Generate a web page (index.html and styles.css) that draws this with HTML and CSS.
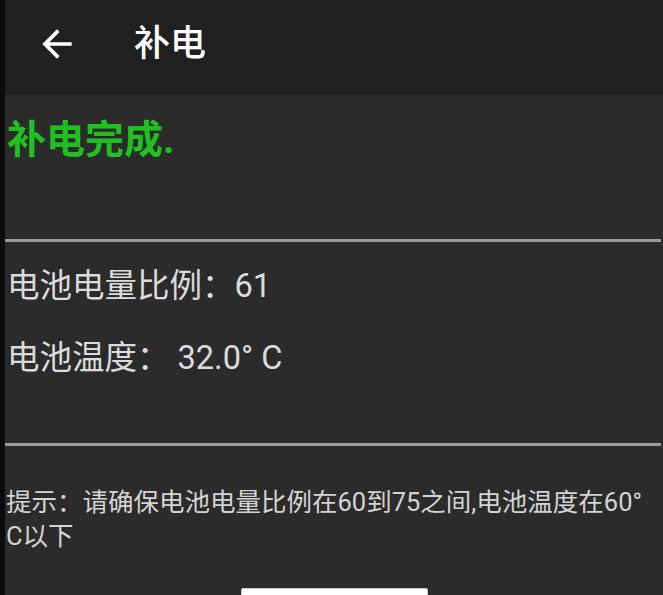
FILE: index.html
```html
<!DOCTYPE html>
<html lang="zh-CN">
<head>
<meta charset="utf-8">
<title>补电</title>
<link rel="stylesheet" href="styles.css">
</head>
<body>
<div class="app">
  <header class="topbar">
    <svg class="back" viewBox="0 0 24 24" width="44" height="44" aria-hidden="true">
      <path d="M20 11H7.83l5.59-5.59L12 4l-8 8 8 8 1.41-1.41L7.83 13H20v-2z" fill="#ffffff"/>
    </svg>
    <h1 class="title">补电</h1>
  </header>
  <main class="content">
    <p class="status">补电完成.</p>
    <hr class="divider divider-top">
    <p class="row row-first">电池电量比例：61</p>
    <p class="row">电池温度： 32.0° C</p>
    <hr class="divider divider-bottom">
    <p class="hint">提示：请确保电池电量比例在60到75之间,电池温度在60°<br>C以下</p>
    <div class="btn-wrap"><div class="btn"></div></div>
  </main>
</div>
</body>
</html>
```
FILE: styles.css
```css
html, body {
  margin: 0;
  padding: 0;
  background: #2b2b2b;
}
body {
  font-family: Roboto, "Noto Sans CJK SC", sans-serif;
  overflow: hidden;
}
.app {
  width: 663px;
  height: 595px;
  box-sizing: border-box;
  border-left: 5px solid #0b0b0b;
  display: flex;
  flex-direction: column;
  overflow: hidden;
}
.topbar {
  height: 95px;
  flex: none;
  background: #202020;
  display: flex;
  align-items: center;
}
.back {
  display: block;
  margin-left: 30px;
  margin-top: -8px;
}
.title {
  margin: -7px 0 0 55px;
  font-size: 36px;
  font-weight: 500;
  color: #ffffff;
  line-height: 44px;
}
.content {
  flex: 1;
  background: #2b2b2b;
  display: flex;
  flex-direction: column;
}
.status {
  margin: 20px 0 0 2px;
  height: 50px;
  line-height: 50px;
  font-size: 39px;
  font-weight: 700;
  color: #20c020;
}
.divider {
  margin: 0 2px 0 0;
  border: 0;
  height: 3px;
  background: #9a9a9a;
}
.divider-top {
  margin-top: 74px;
}
.row {
  margin: 0 0 0 2px;
  height: 72px;
  line-height: 72px;
  font-size: 32.5px;
  color: #dcdcdc;
}
.row-first {
  margin-top: 8px;
}
.divider-bottom {
  margin-top: 49px;
}
.hint {
  margin: 39px 0 0 1px;
  font-size: 25.5px;
  line-height: 34px;
  color: #d4d4d4;
  white-space: nowrap;
}
.btn-wrap {
  margin-top: 35px;
  display: flex;
  justify-content: center;
}
.btn {
  width: 185px;
  height: 44px;
  background: #ffffff;
  border: 1px solid #cccccc;
  border-radius: 2px;
}
```
